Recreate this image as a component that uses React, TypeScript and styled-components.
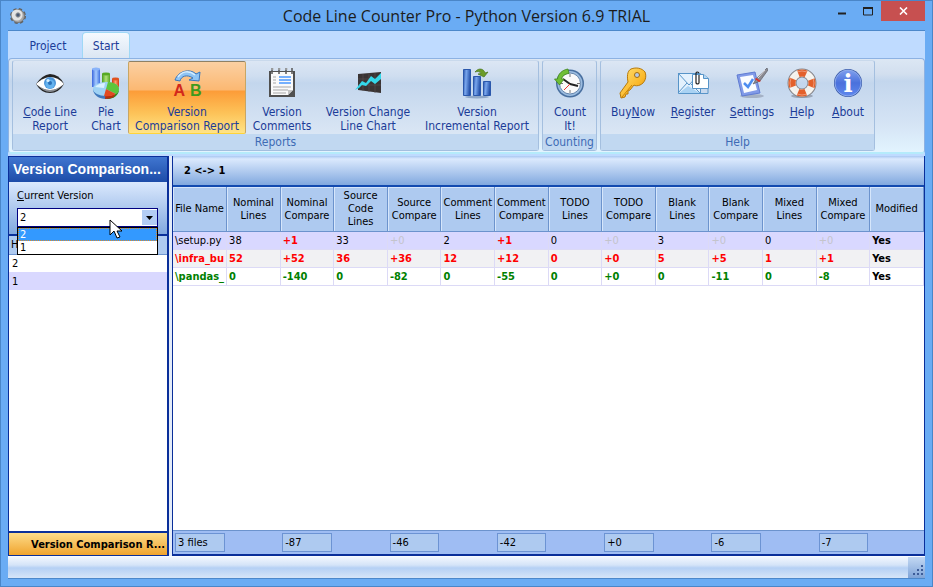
import React from "react";
import styled, { createGlobalStyle, css } from "styled-components";

const uiFont = `"DejaVu Sans Condensed", "DejaVu Sans", sans-serif`;
const navy = "#0a2f9a";

const GlobalStyle = createGlobalStyle`
  * { box-sizing: border-box; }
  body { margin: 0; background: #6aacf4; }
  button, select { font: inherit; color: inherit; }
`;

const Window = styled.div`
  min-height: 100vh;
  display: flex;
  flex-direction: column;
  padding: 0 7px 7px;
  background: #6aacf4;
  border: 1px solid #4a86c8;
  font: 11px/13px ${uiFont};
  color: #000;
`;

const TitleBar = styled.header`
  height: 29px;
  display: grid;
  grid-template-columns: 96px 1fr 96px;
  align-items: center;
`;

const Title = styled.h1`
  margin: 0;
  font: 400 16px/28px "Open Sans", "Noto Sans", sans-serif;
  text-align: center;
  color: #1c1c1c;
  white-space: nowrap;
`;

const WindowButtons = styled.div`
  display: flex;
  align-self: start;
  justify-content: flex-end;
`;

const WindowButton = styled.button<{ $close?: boolean }>`
  width: ${(p) => (p.$close ? 45 : 27)}px;
  height: 20px;
  padding: 0;
  border: 0;
  display: grid;
  place-items: center;
  background: ${(p) => (p.$close ? "#c75050" : "transparent")};
`;

const Client = styled.div`
  flex: 1;
  display: flex;
  flex-direction: column;
  border: 1px solid #4c88ca;
  border-width: 1px 0 1px;
  margin: 0;
  background: #bfdbff;
`;

const Tabs = styled.nav`
  height: 27px;
  display: flex;
  align-items: flex-end;
  padding-left: 13px;
  gap: 7px;
  font-size: 12px;
`;

const Tab = styled.button<{ $active?: boolean }>`
  width: ${(p) => (p.$active ? 48 : 54)}px;
  height: 26px;
  padding: 2px 0 0;
  border: 1px solid transparent;
  border-bottom: 0;
  border-radius: 4px 4px 0 0;
  background: none;
  color: #1b3c98;
  ${(p) =>
    p.$active &&
    css`
      border-color: #9fd8f6;
      background: linear-gradient(#f4f9fe, #dbe6f3);
    `}
`;

const Ribbon = styled.section`
  display: flex;
  gap: 3px;
  height: 96px;
  padding: 1px 3px;
  border: 1px solid #8db2e3;
  border-bottom: 2px solid #b5ebfb;
  border-radius: 4px;
  background: linear-gradient(#dce7f4 0, #d2dfef 15px, #c3d6ed 22px, #d5e4f5 65px, #e3f5ff 95px);
`;

const Group = styled.fieldset`
  min-width: 0;
  margin: 0;
  padding: 0;
  display: flex;
  flex-direction: column;
  border: 1px solid #a4bfdf;
  border-top-color: #c9d9ec;
  border-radius: 3px;
  background: linear-gradient(#dce6f4 0, #cfdef0 15px, #c3d6ed 22px, #dbe7f5 76px);
`;

const GroupItems = styled.div`
  flex: 1;
  display: flex;
  padding: 0 2px 0 3px;
`;

const GroupLabel = styled.div`
  height: 16px;
  font-size: 12px;
  line-height: 16px;
  text-align: center;
  color: #3e6bb5;
  background: #c1d8f1;
`;

const Tool = styled.button<{ $width: number; $active?: boolean }>`
  width: ${(p) => p.$width}px;
  height: 73px;
  padding: 5px 0 0;
  display: flex;
  flex-direction: column;
  align-items: center;
  gap: 6px;
  border: 1px solid transparent;
  border-radius: 2px;
  background: none;
  color: #1b3c98;
  font-size: 12px;
  line-height: 14px;
  white-space: nowrap;
  ${(p) =>
    p.$active &&
    css`
      border-color: #8e8165 #c8a664 #ffd43a;
      background: linear-gradient(#fbd0a2 0, #fbb872 28px, #fc9c38 29px, #fdc45a 52px, #ffe78c 73px);
    `}
`;

const Workspace = styled.main`
  flex: 1;
  display: grid;
  grid-template-columns: 161px minmax(0, 1fr);
  gap: 3px;
  margin-top: 2px;
  background: #e4ecf8;
`;

const SidePanel = styled.aside`
  display: flex;
  flex-direction: column;
  min-width: 0;
  border: 1px solid ${navy};
  border-right-width: 2px;
  background: #fff;
`;

const SideTitle = styled.h2`
  margin: 0;
  height: 25px;
  padding-left: 4px;
  font: 700 14px/24px "Liberation Sans", Arial, sans-serif;
  color: #fff;
  white-space: nowrap;
  background: linear-gradient(#4076d0, #1d4ca8);
`;

const VersionForm = styled.div`
  height: 54px;
  padding: 7px 8px 0;
  border-bottom: 2px solid ${navy};
  background: linear-gradient(#dbe9fd, #81a8df);
`;

const FieldLabel = styled.label`
  display: block;
  margin-bottom: 6px;
`;

const Combo = styled.div`
  position: relative;
  margin-right: 1px;
`;

const ComboSelect = styled.select`
  display: block;
  width: 100%;
  height: 19px;
  padding: 0 2px;
  appearance: none;
  border: 1px solid #000080;
  border-radius: 0;
  background: #fff;
`;

const ComboArrow = styled.span`
  position: absolute;
  top: 2px;
  right: 1px;
  width: 15px;
  height: 15px;
  display: grid;
  place-items: center;
  background: #b3cdf4;
  pointer-events: none;
`;

const ComboList = styled.ul`
  position: absolute;
  z-index: 1;
  top: 19px;
  left: 0;
  right: 0;
  margin: 0;
  padding: 0;
  border: 1px solid #000;
  background: #fff;
  list-style: none;
`;

const ComboOption = styled.li<{ $selected?: boolean }>`
  height: 13px;
  padding: 0 2px;
  line-height: 13px;
  ${(p) =>
    p.$selected &&
    css`
      padding: 0 1px;
      border: 1px dotted #e08a28;
      line-height: 11px;
      color: #fff;
      background: #3399ff;
    `}
`;

const Pointer = styled.svg`
  position: absolute;
  z-index: 2;
  top: 11px;
  left: 92px;
`;

const HistoryTable = styled.table`
  width: 100%;
  border-collapse: collapse;
  text-align: left;
  th {
    height: 18px;
    padding: 0 2px;
    font-weight: 400;
    background: #aecaf0;
    border-bottom: 1px solid #6f96d0;
  }
  td {
    height: 18px;
    padding: 0 3px;
  }
  tbody tr:nth-child(2) { background: #d9d8ff; }
`;

const SideFooter = styled.button`
  height: 24px;
  margin-top: auto;
  padding: 0 2px 0 0;
  border: 0;
  border-top: 2px solid ${navy};
  text-align: right;
  font-weight: 700;
  white-space: nowrap;
  background: linear-gradient(#fddc8a, #f0a42e);
`;

const ReportPanel = styled.section`
  display: flex;
  flex-direction: column;
  min-width: 0;
  border: solid ${navy};
  border-width: 0 1px 2px;
  background: #fff;
`;

const ReportTitle = styled.h2`
  margin: 0;
  height: 31px;
  padding-left: 11px;
  font-size: 11px;
  line-height: 29px;
  border-bottom: 2px solid #124ab0;
  background: linear-gradient(#a9c8f2 0, #dbe9fd 3px, #81a8df 100%);
`;

const ReportTable = styled.table`
  width: 100%;
  table-layout: fixed;
  border-collapse: collapse;
`;

const HeadCell = styled.th`
  height: 44px;
  padding: 0;
  font-weight: 400;
  text-align: center;
  vertical-align: middle;
  background: #aecaf0;
  border-right: 1px solid #6c93cd;
  border-bottom: 1px solid #6c93cd;
  box-shadow: inset 1px 1px #d6e6fb;
`;

const Row = styled.tr`
  &:nth-child(1) { background: #d9d8ff; }
  &:nth-child(2) { background: #f1f1f3; }
`;

const Cell = styled.td<{ $color: string; $bold: boolean }>`
  height: 18px;
  padding: 0 0 0 2px;
  overflow: hidden;
  white-space: nowrap;
  color: ${(p) => p.$color};
  font-weight: ${(p) => (p.$bold ? 700 : 400)};
  border: 1px solid #dcdaf6;
  border-width: 0 1px 1px 0;
`;

const Totals = styled.div`
  display: grid;
  grid-template-columns: repeat(14, minmax(0, 1fr));
  height: 24px;
  margin-top: auto;
  padding-top: 2px;
  border-top: 1px solid #6c93cd;
  background: #9fbdf3;
`;

const TotalSlot = styled.div`
  padding: 0 2px;
`;

const Total = styled.output`
  display: block;
  height: 19px;
  padding-left: 2px;
  line-height: 18px;
  border: 1px solid #6c93d3;
  background: #aecaf0;
`;

const StatusBar = styled.footer`
  height: 22px;
  display: flex;
  justify-content: flex-end;
  background: linear-gradient(#f2f7fe 0, #d5e4f8 8px, #b5d0f4 11px, #d6e5f8 100%);
  border-top: 1px solid #f8fbff;
`;

const Grip = styled.div`
  width: 17px;
  background: linear-gradient(#c3d8f3, #7fa4d8);
`;

/* ---------- icons ---------- */

const Icon = ({ children }: { children: React.ReactNode }) => (
  <svg width="32" height="32" viewBox="0 0 32 32" aria-hidden="true">
    {children}
  </svg>
);

const EyeIcon = () => (
  <Icon>
    <path d="M2 17Q8 8 16 7q9 0 14 10-5 9-14 9Q7 26 2 17z" fill="#242424" />
    <path d="M2 17Q8 11 16 10q8 0 14 7-6 6-14 6Q8 23 2 17z" fill="#fff" />
    <path d="M4 18q5 7 12 7t12-7q-5 5-12 5T4 18z" fill="#8c9096" />
    <circle cx="16" cy="16" r="6" fill="#4a94d8" />
    <circle cx="16" cy="17" r="4.6" fill="#64b2ee" />
    <circle cx="16" cy="16" r="2" fill="#2a70b8" />
    <circle cx="14" cy="13.5" r="1.6" fill="#d8f0ff" />
  </Icon>
);

const PieIcon = () => (
  <Icon>
    <defs>
      <linearGradient id="pieBlue" x2="1"><stop stopColor="#3a66dd" /><stop offset=".5" stopColor="#a6cbff" /><stop offset="1" stopColor="#4071e0" /></linearGradient>
      <linearGradient id="pieGreen" x2="1"><stop stopColor="#4c9c19" /><stop offset=".5" stopColor="#b2e37a" /><stop offset="1" stopColor="#58a522" /></linearGradient>
      <linearGradient id="pieRed" x2="1"><stop stopColor="#cf3510" /><stop offset=".5" stopColor="#ff9a6c" /><stop offset="1" stopColor="#d43c12" /></linearGradient>
    </defs>
    <path d="M2 2v18h8V2z" fill="url(#pieBlue)" />
    <ellipse cx="6" cy="2" rx="4" ry="1.5" fill="#8ab4fa" />
    <path d="M12 7v10h8V7z" fill="url(#pieGreen)" />
    <ellipse cx="16" cy="7" rx="4" ry="1.4" fill="#57a922" />
    <path d="M22 12v9h7v-9z" fill="url(#pieRed)" />
    <ellipse cx="25.5" cy="12" rx="3.5" ry="1.4" fill="#e0521f" />
    <path d="M3 22c0 6 6 10 13 10s13-4 13-10z" fill="#3f78bd" />
    <path d="M17 32c7 0 12-4 12-10l-10 1z" fill="#2f8f18" />
    <path d="M15 32q5 0 9-2l1-3-9-4z" fill="#b72c0e" />
    <ellipse cx="16" cy="22" rx="13" ry="7" fill="#9fd2f5" />
    <path d="M16 22l2-7c6 0 11 3 11 7 0 2-1 4-3 5z" fill="#5cc63b" />
    <path d="M16 22l10 5q-5 3-12 2z" fill="#e24a21" />
    <path d="M5 20q4-4 10-4l-1 5z" fill="#d9f1ff" />
  </Icon>
);

const CompareIcon = () => (
  <Icon>
    <path d="M4 13C7 4 19 1 25 7l4-2-1 9-10-1 4-2C16 7 10 9 9 14z" fill="#8fc4f4" stroke="#3675bd" strokeWidth="1" />
    <path d="M7 10c4-6 11-7 17-2" fill="none" stroke="#d8efff" strokeWidth="1.5" />
    <text x="2.5" y="29" fontFamily="Liberation Sans" fontWeight="700" fontSize="16" fill="#d2281b">A</text>
    <text x="19" y="29" fontFamily="Liberation Sans" fontWeight="700" fontSize="16" fill="#3d9a1c">B</text>
  </Icon>
);

const NotesIcon = () => (
  <Icon>
    <path d="M3 4h26v26H3z" fill="#505050" />
    <path d="M5 5h22v18l-5 5H5z" fill="#fafafa" />
    <path d="M22 28v-5h5z" fill="#c4c4c4" />
    <path d="M6 1v6M13 1v6M20 1v6M26 1v6" stroke="#555" strokeWidth="1.5" />
    <path d="M5 2h3M12 2h3M19 2h3" stroke="#bbb" />
    <path d="M13 10h12M13 13h12M13 16h12" stroke="#4a98ff" strokeWidth="1.5" />
    <path d="M7 10h3M7 13h3M7 16h3M7 20h18M7 23h15M7 26h13" stroke="#a7a7a7" />
  </Icon>
);

const LineIcon = () => (
  <Icon>
    <path d="M6 7l23-2v21L6 23z" fill="#3a3434" />
    <path d="M11 7v17M17 6v19M23 6v20M6 12h23M6 18h23" stroke="#5b5050" strokeWidth=".6" />
    <path d="M3 23l7-9 4 2 5-7 4 3 6-6v6l-6 5-4-3-5 5-4-1-3 3z" fill="#35d8ea" />
  </Icon>
);

const BarsIcon = () => (
  <Icon>
    <defs>
      <linearGradient id="barBlue" x2="1" y2=".2"><stop stopColor="#2852a8" /><stop offset=".4" stopColor="#79a7ee" /><stop offset="1" stopColor="#2551a9" /></linearGradient>
    </defs>
    <ellipse cx="16" cy="30" rx="12" ry="1.5" fill="#8ea7c8" />
    <path d="M2.500 2.500h7v26h-7z" fill="url(#barBlue)" stroke="#2b58ac" />
    <path d="M12.500 9.500h7v19h-7z" fill="url(#barBlue)" stroke="#2b58ac" />
    <path d="M22.500 14.500h7v14h-7z" fill="url(#barBlue)" stroke="#2b58ac" />
    <path d="M14 5c4-5 9-3 10 1l3-1-4 5-6-3 3-.5c-1-2-3-2.500-6-1.500z" fill="#6b9c28" stroke="#49751b" strokeWidth=".7" />
  </Icon>
);

const ClockIcon = () => (
  <Icon>
    <circle cx="16" cy="16.5" r="14" fill="#486f9f" />
    <circle cx="16" cy="16.5" r="12.5" fill="#9bbce0" />
    <circle cx="16" cy="16.5" r="10.5" fill="#fafafa" stroke="#6787ad" />
    <path d="M16 7v3M16 23v3M6 16.500h3M23 16.500h3" stroke="#777" />
    <path d="M16 17L9 12M16 17l8 2" stroke="#222" strokeWidth="2" />
    <path d="M16 17l-6 6" stroke="#e33" />
    <path d="M14 2C8 3 4 7 3.500 12L.5 12l5 6 4.500-6H7.500c1-3 3-5 7.500-5.500z" fill="#6fbf35" stroke="#43861d" strokeWidth=".8" />
  </Icon>
);

const KeyIcon = () => (
  <Icon>
    <defs>
      <linearGradient id="keyGold" x2="1" y2="1"><stop stopColor="#ffe27a" /><stop offset=".6" stopColor="#fbb92a" /><stop offset="1" stopColor="#d98507" /></linearGradient>
    </defs>
    <path d="M14 2c5-2 11-1 14 3 2 5 0 11-5 13-2 1-5 1-6 0l-4 5-2 1v3H9l-1 3-4 1-1-5 8-11c-1-5-1-11 3-13z" fill="url(#keyGold)" stroke="#b77909" />
    <circle cx="20" cy="8" r="2.5" fill="#b7c9e2" stroke="#a36d0d" />
    <path d="M15 18L5 30" stroke="#c98309" />
  </Icon>
);

const MailIcon = () => (
  <Icon>
    <path d="M1.500 6.500h22v20h-22z" fill="#e3f1fd" stroke="#5794c8" />
    <path d="M1 6l11 12L23 6M1 26l9-10M23 26l-9-9" fill="none" stroke="#5794c8" />
    <path d="M2 26l9-7 12 7z" fill="#a9d2f3" />
    <path d="M15.500 7.500h11l5 4v10h-16z" fill="#fff" stroke="#5794c8" />
    <path d="M26.500 7.500v4h5" fill="#b3d6f3" stroke="#5794c8" />
    <path d="M22 8v8q-1 2-3 0V6q1-2 3 0" fill="none" stroke="#222" strokeWidth="1.2" />
    <path d="M23 26.500h8v-5" fill="none" stroke="#5794c8" />
  </Icon>
);

const SettingsIcon = () => (
  <Icon>
    <ellipse cx="16" cy="29" rx="12" ry="2" fill="#a4b1c5" />
    <path d="M1 8l18-3 5 21-18 3z" fill="#819ae8" stroke="#5f7bd2" />
    <path d="M4 10l13-2 4 15-13 3z" fill="#fafcff" />
    <path d="M8 16l4 4 5-8" fill="none" stroke="#4d8df0" strokeWidth="2.5" />
    <path d="M17 17l4-6L31 1l1 2-8 11z" fill="#8c8c93" stroke="#5d5d65" strokeWidth=".7" />
    <path d="M20 11l5 3-2 1-4-3z" fill="#e32f25" />
    <path d="M22 11l7-8" stroke="#e0e0e5" />
  </Icon>
);

const HelpIcon = () => (
  <Icon>
    <ellipse cx="16" cy="29" rx="11" ry="2" fill="#9aa6b7" />
    <circle cx="16" cy="16" r="10" fill="none" stroke="#85858a" strokeWidth="9" />
    <circle cx="16" cy="16" r="10" fill="none" stroke="#f3f1ec" strokeWidth="7" />
    <circle cx="16" cy="16" r="10" fill="none" stroke="#e3602b" strokeWidth="7" strokeDasharray="8 7.7" strokeDashoffset="4" />
    <circle cx="16" cy="16" r="12" fill="none" stroke="#fff" strokeWidth="1" opacity=".35" />
  </Icon>
);

const AboutIcon = () => (
  <Icon>
    <defs>
      <linearGradient id="infoBlue" x2="0" y2="1"><stop stopColor="#7f9fee" /><stop offset=".5" stopColor="#4a71dc" /><stop offset="1" stopColor="#5f88ee" /></linearGradient>
    </defs>
    <circle cx="16" cy="16" r="14" fill="#3557a8" />
    <circle cx="16" cy="16" r="13" fill="url(#infoBlue)" stroke="#9ab5ef" strokeWidth=".8" />
    <text x="16" y="25" textAnchor="middle" fontFamily="DejaVu Serif" fontWeight="700" fontSize="24" fill="#fff">i</text>
  </Icon>
);

const GearIcon = () => (
  <svg width="18" height="18" viewBox="0 0 18 18" aria-hidden="true">
    <circle cx="10" cy="9" r="6.5" fill="none" stroke="#606060" strokeWidth="3" strokeDasharray="3 2.1" />
    <circle cx="10" cy="9" r="6.5" fill="#a9a9a9" stroke="#777" />
    <circle cx="9" cy="8" r="5.5" fill="#e4e4e4" />
    <circle cx="10" cy="8" r="2.2" fill="#4a5a74" stroke="#999" />
  </svg>
);

/* ---------- data ---------- */

type ToolItem = { label: React.ReactNode; icon: React.ReactNode; width: number; active?: boolean };

const groups: { name: string; items: ToolItem[] }[] = [
  {
    name: "Reports",
    items: [
      { label: <><u>C</u>ode Line<br />Report</>, icon: <EyeIcon />, width: 68 },
      { label: <>Pie<br />Chart</>, icon: <PieIcon />, width: 44 },
      { label: <>Version<br />Comparison Report</>, icon: <CompareIcon />, width: 118, active: true },
      { label: <>Version<br />Comments</>, icon: <NotesIcon />, width: 72 },
      { label: <>Version Change<br />Line Chart</>, icon: <LineIcon />, width: 100 },
      { label: <>Version<br />Incremental Report</>, icon: <BarsIcon />, width: 118 },
    ],
  },
  { name: "Counting", items: [{ label: <>Count<br />It!</>, icon: <ClockIcon />, width: 48 }] },
  {
    name: "Help",
    items: [
      { label: <>Buy<u>N</u>ow</>, icon: <KeyIcon />, width: 58 },
      { label: <><u>R</u>egister</>, icon: <MailIcon />, width: 62 },
      { label: <><u>S</u>ettings</>, icon: <SettingsIcon />, width: 56 },
      { label: <><u>H</u>elp</>, icon: <HelpIcon />, width: 44 },
      { label: <><u>A</u>bout</>, icon: <AboutIcon />, width: 48 },
    ],
  },
];

const columns = [
  ["File Name"], ["Nominal", "Lines"], ["Nominal", "Compare"], ["Source", "Code", "Lines"],
  ["Source", "Compare"], ["Comment", "Lines"], ["Comment", "Compare"], ["TODO", "Lines"],
  ["TODO", "Compare"], ["Blank", "Lines"], ["Blank", "Compare"], ["Mixed", "Lines"],
  ["Mixed", "Compare"], ["Modified"],
];

const rows: { base: string; bold: boolean; cells: string[] }[] = [
  { base: "#000", bold: false, cells: ["\\setup.py", "38", "+1", "33", "+0", "2", "+1", "0", "+0", "3", "+0", "0", "+0", "Yes"] },
  { base: "#f00", bold: true, cells: ["\\infra_bu", "52", "+52", "36", "+36", "12", "+12", "0", "+0", "5", "+5", "1", "+1", "Yes"] },
  { base: "#008000", bold: true, cells: ["\\pandas_", "0", "-140", "0", "-82", "0", "-55", "0", "+0", "0", "-11", "0", "-8", "Yes"] },
];

const totals = ["3 files", "", "-87", "", "-46", "", "-42", "", "+0", "", "-6", "", "-7", ""];

function cellStyle(text: string, base: string, bold: boolean) {
  if (text === "Yes") return { color: "#000", bold: true };
  if (!bold && text === "+0") return { color: "#c4c4cc", bold: false };
  if (!bold && text.startsWith("+")) return { color: "#f00", bold: true };
  return { color: base, bold };
}

export default function App() {
  return (
    <>
      <GlobalStyle />
      <Window>
        <TitleBar>
          <GearIcon />
          <Title>Code Line Counter Pro - Python Version 6.9 TRIAL</Title>
          <WindowButtons>
            <WindowButton aria-label="Minimize">
              <svg width="10" height="10"><path d="M1 7.500h8" stroke="#222" strokeWidth="2" /></svg>
            </WindowButton>
            <WindowButton aria-label="Maximize">
              <svg width="10" height="9"><path d="M.5 1h9v7h-9z" fill="none" stroke="#222" /><path d="M0 1h10" stroke="#222" strokeWidth="2" /></svg>
            </WindowButton>
            <WindowButton $close aria-label="Close">
              <svg width="9" height="8"><path d="M1 .5l7 7M8 .5l-7 7" stroke="#fff" strokeWidth="1.6" /></svg>
            </WindowButton>
          </WindowButtons>
        </TitleBar>
        <Client>
          <Tabs>
            <Tab>Project</Tab>
            <Tab $active>Start</Tab>
          </Tabs>
          <Ribbon>
            {groups.map((g) => (
              <Group key={g.name} aria-label={g.name}>
                <GroupItems>
                  {g.items.map((t, i) => (
                    <Tool key={i} $width={t.width} $active={t.active}>
                      {t.icon}
                      <span>{t.label}</span>
                    </Tool>
                  ))}
                </GroupItems>
                <GroupLabel>{g.name}</GroupLabel>
              </Group>
            ))}
          </Ribbon>
          <Workspace>
            <SidePanel>
              <SideTitle>Version Comparison...</SideTitle>
              <VersionForm>
                <FieldLabel htmlFor="version"><u>C</u>urrent Version</FieldLabel>
                <Combo>
                  <ComboSelect id="version" defaultValue="2">
                    <option>2</option>
                    <option>1</option>
                  </ComboSelect>
                  <ComboArrow>
                    <svg width="7" height="4"><path d="M0 0h7L3.500 4z" /></svg>
                  </ComboArrow>
                  <ComboList role="listbox" aria-label="Current Version">
                    <ComboOption role="option" aria-selected $selected>2</ComboOption>
                    <ComboOption role="option" aria-selected={false}>1</ComboOption>
                  </ComboList>
                  <Pointer width="14" height="20" viewBox="0 0 14 20" aria-hidden="true">
                    <path d="M1 1v15l4-4 3 7 3-1-3-6h5z" fill="#fff" stroke="#000" />
                  </Pointer>
                </Combo>
              </VersionForm>
              <HistoryTable>
                <thead><tr><th>H</th></tr></thead>
                <tbody>
                  <tr><td>2</td></tr>
                  <tr><td>1</td></tr>
                </tbody>
              </HistoryTable>
              <SideFooter>Version Comparison R...</SideFooter>
            </SidePanel>
            <ReportPanel>
              <ReportTitle>2 &lt;-&gt; 1</ReportTitle>
              <ReportTable>
                <thead>
                  <tr>
                    {columns.map((c) => (
                      <HeadCell key={c.join(" ")}>
                        {c.map((line, i) => (
                          <React.Fragment key={line}>{i > 0 && <br />}{line}</React.Fragment>
                        ))}
                      </HeadCell>
                    ))}
                  </tr>
                </thead>
                <tbody>
                  {rows.map((r) => (
                    <Row key={r.cells[0]}>
                      {r.cells.map((text, i) => {
                        const s = cellStyle(text, r.base, r.bold);
                        return <Cell key={i} $color={s.color} $bold={s.bold}>{text}</Cell>;
                      })}
                    </Row>
                  ))}
                </tbody>
              </ReportTable>
              <Totals>
                {totals.map((t, i) => (
                  <TotalSlot key={i}>{t && <Total>{t}</Total>}</TotalSlot>
                ))}
              </Totals>
            </ReportPanel>
          </Workspace>
          <StatusBar>
            <Grip>
              <svg width="17" height="21" aria-hidden="true">
                <path d="M13 8h2v2h-2zM9 12h2v2H9zM13 12h2v2h-2zM5 16h2v2H5zM9 16h2v2H9zM13 16h2v2h-2z" fill="#3c5c98" />
              </svg>
            </Grip>
          </StatusBar>
        </Client>
      </Window>
    </>
  );
}
